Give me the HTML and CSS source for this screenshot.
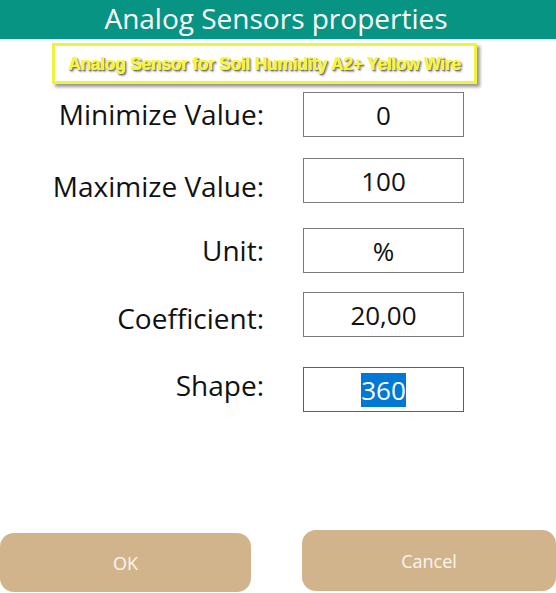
FILE: index.html
```html
<!DOCTYPE html>
<html>
<head>
    <link rel="stylesheet" href="styles.css">
</head>
<body>
    <div class="dialog">
        <div class="title-bar">Analog Sensors properties</div>
        <div class="sensor-name">Analog Sensor for Soil Humidity A2+ Yellow Wire</div>

        <div class="fields">
            <div class="field field-min">
                <label class="field-label">Minimize Value:</label>
                <input class="field-input" type="text" value="0">
            </div>
            <div class="field field-max">
                <label class="field-label">Maximize Value:</label>
                <input class="field-input" type="text" value="100">
            </div>
            <div class="field field-unit">
                <label class="field-label">Unit:</label>
                <input class="field-input" type="text" value="%">
            </div>
            <div class="field field-coef">
                <label class="field-label">Coefficient:</label>
                <input class="field-input" type="text" value="20,00">
            </div>
            <div class="field field-shape">
                <label class="field-label">Shape:</label>
                <div class="field-input focused"><span class="selected">360</span></div>
            </div>
        </div>

        <div class="button-row">
            <button class="btn btn-ok">OK</button>
            <button class="btn btn-cancel">Cancel</button>
        </div>
    </div>
</body>
</html>
```

FILE: styles.css
```css
html, body {
    margin: 0;
    padding: 0;
    background: #ffffff;
}
.dialog {
    width: 556px;
    height: 594px;
    display: flex;
    flex-direction: column;
    font-family: "Open Sans", "Noto Sans", sans-serif;
    color: #111;
    overflow: hidden;
}
.title-bar {
    height: 39px;
    background-color: #079482;
    color: #ffffff;
    font-size: 28px;
    line-height: 37px;
    text-align: center;
    padding-right: 4px;
}
.sensor-name {
    box-sizing: border-box;
    margin: 4px 0 3px 52px;
    width: 425px;
    height: 41px;
    border: 3px solid #f2f23c;
    box-shadow: 3px 3px 3px rgba(0, 0, 0, 0.4);
    font-family: "Liberation Sans", Arial, sans-serif;
    font-weight: bold;
    font-size: 17.5px;
    letter-spacing: -0.3px;
    color: #f8f832;
    text-shadow: 0 0 1px #fbfb90, 1px 1px 1px #5e5e5e, 2px 2px 2px rgba(0, 0, 0, 0.35);
    display: flex;
    align-items: center;
    justify-content: center;
    padding-top: 1px;
}
.fields {
    display: flex;
    flex-direction: column;
}
.field {
    display: grid;
    grid-template-columns: 264px 161px;
    column-gap: 39px;
    height: 45px;
    align-items: center;
}
.field-min { margin-top: 5px; }
.field-max { margin-top: 21px; }
.field-unit { margin-top: 25px; }
.field-coef { margin-top: 19px; }
.field-shape { margin-top: 30px; }
.field-label {
    font-size: 28px;
    text-align: right;
    line-height: 45px;
}
/* labels that sit a little off their box's centre */
.field-max .field-label {
    margin: 6px 0 -6px;
}
.field-coef .field-label {
    margin: 4px 0 -4px;
}
.field-shape .field-label {
    margin: -4px 0 4px;
}
.field-input {
    box-sizing: border-box;
    width: 161px;
    height: 45px;
    border: 1px solid #7a7a7a;
    font-family: "Open Sans", "Noto Sans", sans-serif;
    font-size: 26px;
    color: #111;
    text-align: center;
    padding: 0;
    margin: 0;
    outline: none;
}
.focused {
    border-color: #0078d7;
    display: flex;
    align-items: center;
    justify-content: center;
}
.selected {
    background-color: #0078d7;
    color: #ffffff;
    line-height: 34px;
}
.button-row {
    margin-top: auto;
    display: flex;
    justify-content: space-between;
    align-items: flex-end;
    padding-bottom: 2px;
    border-bottom: 1px solid #b7dcd6;
}
.btn {
    height: 59px;
    border: none;
    border-radius: 14px;
    background-color: #d2b48c;
    color: #fbf6ee;
    font-family: "Open Sans", "Noto Sans", sans-serif;
    font-size: 18px;
}
.btn-ok {
    width: 251px;
    margin-bottom: -1px;
}
.btn-cancel {
    width: 254px;
    height: 61px;
}
```
